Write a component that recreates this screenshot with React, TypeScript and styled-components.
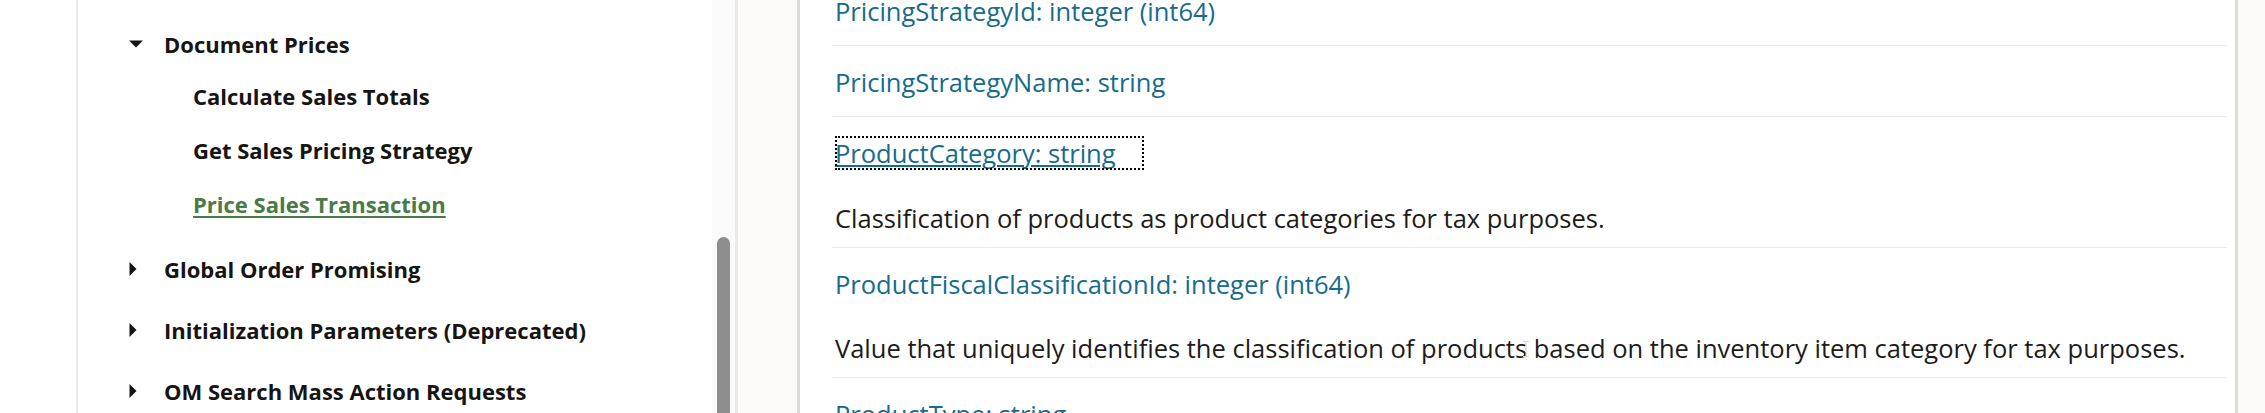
import React from "react";
import styled, { createGlobalStyle } from "styled-components";

const GlobalStyle = createGlobalStyle`
  html, body {
    margin: 0;
    padding: 0;
    background: #ffffff;
  }
  body {
    font-family: "Open Sans", "Noto Sans", sans-serif;
  }
`;

type NavChild = { label: string; active?: boolean };
type NavItem = { label: string; expanded?: boolean; children?: NavChild[] };

const navItems: NavItem[] = [
  {
    label: "Document Prices",
    expanded: true,
    children: [
      { label: "Calculate Sales Totals" },
      { label: "Get Sales Pricing Strategy" },
      { label: "Price Sales Transaction", active: true },
    ],
  },
  { label: "Global Order Promising" },
  { label: "Initialization Parameters (Deprecated)" },
  { label: "OM Search Mass Action Requests" },
];

type Field = { name: string; description?: string; focused?: boolean };

const fields: Field[] = [
  { name: "PricingStrategyId: integer (int64)" },
  { name: "PricingStrategyName: string" },
  {
    name: "ProductCategory: string",
    focused: true,
    description: "Classification of products as product categories for tax purposes.",
  },
  {
    name: "ProductFiscalClassificationId: integer (int64)",
    description:
      "Value that uniquely identifies the classification of products based on the inventory item category for tax purposes.",
  },
  { name: "ProductType: string" },
];

const Page = styled.div`
  position: relative;
  display: flex;
  width: 2265px;
  height: 413px;
  overflow: hidden;
  background: #ffffff;
`;

const LeftGutter = styled.div`
  width: 76px;
  flex-shrink: 0;
  background: #ffffff;
`;

const Sidebar = styled.nav`
  width: 634px;
  flex-shrink: 0;
  border-left: 2px solid #ecebe7;
  background: #ffffff;
`;

const NavList = styled.ul`
  list-style: none;
  margin: 0;
  padding: 10px 0 0 0;
`;

const NavRow = styled.div`
  display: flex;
  align-items: center;
  padding: 19px 0 12px 51px;
  font-size: 22px;
  font-weight: 700;
  line-height: 30px;
  color: #161513;
  white-space: nowrap;
`;

const Caret = styled.span`
  display: inline-flex;
  align-items: center;
  width: 35px;
  height: 30px;
  flex-shrink: 0;
`;

const ChildList = styled.ul`
  list-style: none;
  margin: -2px 0 4px 0;
  padding: 0;
`;

const ChildRow = styled.li<{ $active?: boolean }>`
  padding: 12px 0 12px 115px;
  font-size: 22px;
  font-weight: 700;
  line-height: 30px;
  white-space: nowrap;
  color: ${(p) => (p.$active ? "#4a7a46" : "#161513")};
  text-decoration: ${(p) => (p.$active ? "underline" : "none")};
  text-decoration-thickness: 2px;
  text-underline-offset: 3px;
`;

const ScrollTrack = styled.div`
  width: 23px;
  flex-shrink: 0;
  display: flex;
  flex-direction: column;
  align-items: center;
  padding-top: 237px;
  background: #fafafa;
`;

const ScrollThumb = styled.div`
  width: 13px;
  flex: 1;
  background: #8d8d8d;
  border-radius: 7px 7px 0 0;
`;

const Splitter = styled.div`
  width: 59px;
  flex-shrink: 0;
  background: #fbfaf9;
  border-left: 3px solid #ebe9e4;
  border-right: 3px solid #dedad5;
`;

const Content = styled.main`
  flex: 1;
  min-width: 0;
  padding: 0 8px 0 32px;
  background: #ffffff;
`;

const FieldList = styled.div`
  margin-top: -25px;
`;

const FieldItem = styled.div`
  padding: 17px 0 10px 3px;
  border-bottom: 1px solid #ebebeb;
`;

const FieldName = styled.div`
  margin-bottom: 5px;
  font-size: 25.5px;
  line-height: 38px;
  color: #176b8c;
  white-space: nowrap;
`;

const FocusRing = styled.span`
  outline: 2px dotted #000000;
  outline-offset: -2px;
  padding-right: 28px;
`;

const FieldLink = styled.span`
  text-decoration: underline;
  text-decoration-thickness: 2px;
  text-underline-offset: 2px;
`;

const FieldDesc = styled.p`
  margin: 26.5px 0 0 0;
  font-size: 25.5px;
  line-height: 38px;
  color: #1d1c1a;
  white-space: nowrap;
`;

const RightRail = styled.div`
  width: 27px;
  flex-shrink: 0;
  background: #fbfaf9;
  border-left: 3px solid #dfdcd7;
`;

const TextCursor = styled.svg`
  position: absolute;
  left: 1522px;
  top: 341px;
`;

const CaretIcon = ({ open }: { open?: boolean }) =>
  open ? (
    <svg width="14" height="8" viewBox="0 0 14 8">
      <polygon points="0,0.5 14,0.5 7,7.5" fill="#161513" />
    </svg>
  ) : (
    <svg width="8" height="14" viewBox="0 0 8 14">
      <polygon points="0.5,0 7.5,7 0.5,14" fill="#161513" />
    </svg>
  );

export default function App() {
  return (
    <>
      <GlobalStyle />
      <Page>
        <LeftGutter />
        <Sidebar>
          <NavList>
            {navItems.map((item) => (
              <li key={item.label}>
                <NavRow>
                  <Caret>
                    <CaretIcon open={item.expanded} />
                  </Caret>
                  {item.label}
                </NavRow>
                {item.expanded && item.children && (
                  <ChildList>
                    {item.children.map((c) => (
                      <ChildRow key={c.label} $active={c.active}>
                        {c.label}
                      </ChildRow>
                    ))}
                  </ChildList>
                )}
              </li>
            ))}
          </NavList>
        </Sidebar>
        <ScrollTrack>
          <ScrollThumb />
        </ScrollTrack>
        <Splitter />
        <Content>
          <FieldList>
            {fields.map((f) => (
              <FieldItem key={f.name}>
                <FieldName>
                  {f.focused ? (
                    <FocusRing>
                      <FieldLink>{f.name}</FieldLink>
                    </FocusRing>
                  ) : (
                    f.name
                  )}
                </FieldName>
                {f.description && <FieldDesc>{f.description}</FieldDesc>}
              </FieldItem>
            ))}
          </FieldList>
        </Content>
        <RightRail />
        <TextCursor width="8" height="16" viewBox="0 0 8 16">
          <path d="M1 0.5h6M4 0.5v15M1 15.5h6" stroke="#d4d4d4" strokeWidth="1" fill="none" />
        </TextCursor>
      </Page>
    </>
  );
}
